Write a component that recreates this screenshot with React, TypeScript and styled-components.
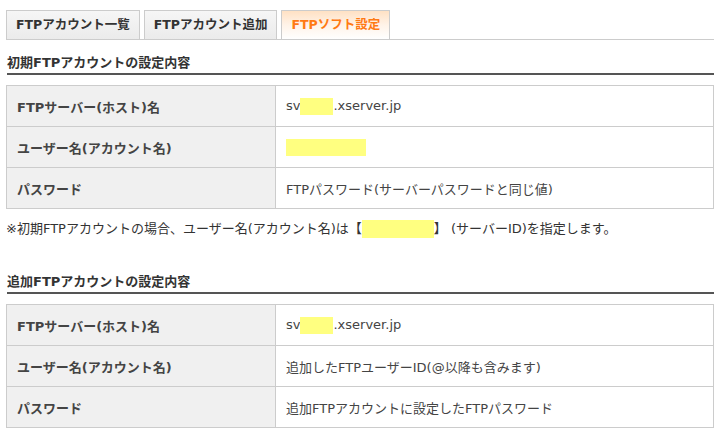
import React from "react";
import styled, { createGlobalStyle } from "styled-components";

const GlobalStyle = createGlobalStyle`
  html, body {
    margin: 0;
    padding: 0;
    background: #fff;
  }
  body {
    font-family: "DejaVu Sans", "Noto Sans CJK JP", sans-serif;
    font-size: 13px;
    color: #444;
  }
`;

const Page = styled.div`
  width: 708px;
  padding: 10px 0 0 6px;
`;

const TabBar = styled.ul`
  display: flex;
  gap: 4px;
  margin: 0;
  padding: 0;
  list-style: none;
  border-bottom: 1px solid #ccc;
`;

const Tab = styled.li<{ $active?: boolean }>`
  height: 28px;
  line-height: 28px;
  padding: 0 9px;
  margin-bottom: -1px;
  border: 1px solid #ccc;
  font-size: 12.5px;
  font-weight: bold;
  color: ${(p) => (p.$active ? "#ff7a14" : "#333")};
  background: ${(p) =>
    p.$active
      ? "linear-gradient(to bottom, #ffe1c4 0%, #fff3e8 50%, #ffffff 100%)"
      : "linear-gradient(to bottom, #f6f6f6 0%, #ebebeb 100%)"};
`;

const Section = styled.section<{ $gap: number }>`
  margin-top: ${(p) => p.$gap}px;
`;

const Heading = styled.h2`
  margin: 0 0 10px 1px;
  line-height: 20px;
  font-size: 13px;
  font-weight: bold;
  color: #333;
  border-bottom: 2px solid #555;
`;

const Table = styled.table`
  width: 708px;
  border-collapse: collapse;
  table-layout: fixed;
`;

const Label = styled.th`
  width: 248px;
  height: 40px;
  padding: 0 10px;
  text-align: left;
  font-weight: bold;
  color: #444;
  background: #f0f0f0;
  border: 1px solid #ccc;
`;

const Value = styled.td`
  height: 40px;
  padding: 0 10px;
  color: #444;
  border: 1px solid #ccc;
`;

const Mask = styled.span<{ $w: number }>`
  display: inline-block;
  width: ${(p) => p.$w}px;
  height: 17px;
  vertical-align: middle;
  background: #ffff80;
`;

const Note = styled.p`
  margin: 11px 0 0;
  line-height: 18px;
  color: #333;
`;

const NoteMask = styled.span`
  display: inline-block;
  width: 72px;
  height: 18px;
  vertical-align: top;
  background: #ffff80;
`;

const Host = () => (
  <>
    sv<Mask $w={33} />.xserver.jp
  </>
);

type Row = { label: string; value: React.ReactNode };

const SettingTable = ({ rows }: { rows: Row[] }) => (
  <Table>
    <tbody>
      {rows.map((r) => (
        <tr key={r.label}>
          <Label>{r.label}</Label>
          <Value>{r.value}</Value>
        </tr>
      ))}
    </tbody>
  </Table>
);

const initialRows: Row[] = [
  { label: "FTPサーバー(ホスト)名", value: <Host /> },
  { label: "ユーザー名(アカウント名)", value: <Mask $w={80} /> },
  { label: "パスワード", value: "FTPパスワード(サーバーパスワードと同じ値)" },
];

const addedRows: Row[] = [
  { label: "FTPサーバー(ホスト)名", value: <Host /> },
  { label: "ユーザー名(アカウント名)", value: "追加したFTPユーザーID(@以降も含みます)" },
  { label: "パスワード", value: "追加FTPアカウントに設定したFTPパスワード" },
];

export default function App() {
  return (
    <Page>
      <GlobalStyle />
      <TabBar>
        <Tab>FTPアカウント一覧</Tab>
        <Tab>FTPアカウント追加</Tab>
        <Tab $active>FTPソフト設定</Tab>
      </TabBar>

      <Section $gap={13}>
        <Heading>初期FTPアカウントの設定内容</Heading>
        <SettingTable rows={initialRows} />
        <Note>
          ※初期FTPアカウントの場合、ユーザー名(アカウント名)は【<NoteMask />】 (サーバーID)を指定します。
        </Note>
      </Section>

      <Section $gap={34}>
        <Heading>追加FTPアカウントの設定内容</Heading>
        <SettingTable rows={addedRows} />
      </Section>
    </Page>
  );
}
